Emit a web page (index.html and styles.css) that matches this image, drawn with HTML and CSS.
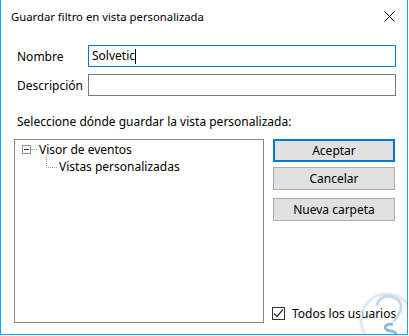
FILE: index.html
```html
<!DOCTYPE html>
<html lang="es">
<head>
    <meta charset="UTF-8">
    <title>Guardar filtro en vista personalizada</title>
    <link rel="stylesheet" href="styles.css">
</head>
<body>

<div class="window">
    <div class="titlebar">
        <span class="title">Guardar filtro en vista personalizada</span>
        <svg class="close" width="11" height="11" viewBox="0 0 11 11">
            <path d="M0.5 0.5 L10.5 10.5 M10.5 0.5 L0.5 10.5" stroke="#000" stroke-width="1" fill="none"/>
        </svg>
    </div>

    <div class="content">
        <div class="field-row">
            <span class="field-label">Nombre</span>
            <div class="field-input focused">Solvetic<span class="caret"></span></div>
        </div>
        <div class="field-row">
            <span class="field-label">Descripción</span>
            <div class="field-input"></div>
        </div>

        <div class="section-label">Seleccione dónde guardar la vista personalizada:</div>

        <div class="main">
            <div class="tree">
                <div class="tree-row">
                    <span class="expander"><span class="minus"></span></span>
                    <span class="dash"></span>
                    <span class="node-text">Visor de eventos</span>
                </div>
                <div class="tree-row child">
                    <span class="connector"></span>
                    <span class="node-text">Vistas personalizadas</span>
                </div>
            </div>

            <div class="actions">
                <button class="btn default">Aceptar</button>
                <button class="btn">Cancelar</button>
                <button class="btn spaced">Nueva carpeta</button>

                <label class="check-row">
                    <span class="checkbox">
                        <svg width="11" height="11" viewBox="0 0 11 11">
                            <path d="M1 5.5 L4 8.5 L10 1.5" stroke="#333" stroke-width="1.2" fill="none"/>
                        </svg>
                    </span>
                    <span class="check-text">Todos los usuarios</span>
                </label>
            </div>
        </div>
    </div>

    <!-- watermark -->
    <svg class="watermark" width="60" height="56" viewBox="0 0 60 56">
        <circle cx="34" cy="34" r="26" fill="none" stroke="#d8e3ea" stroke-width="3" opacity="0.8"/>
        <path d="M24 20 C24 8 46 6 48 20 C49 28 42 30 41 36" fill="none" stroke="#c6dced" stroke-width="3"/>
        <path d="M40 38 C30 38 30 44 38 45 C46 46 44 52 34 52" fill="none" stroke="#5d9fd4" stroke-width="3" opacity="0.7"/>
    </svg>
</div>

</body>
</html>
```

FILE: styles.css
```css
body {
    margin: 0;
    background-color: #ffffff;
    font-family: 'Noto Sans', 'Liberation Sans', sans-serif;
    font-size: 12px;
    color: #000;
}

.window {
    position: relative;
    width: 408px;
    height: 335px;
    box-sizing: border-box;
    border: 1px solid #18a0f0;
    border-top: none;
    display: flex;
    flex-direction: column;
    overflow: hidden;
}

.titlebar {
    height: 33px;
    display: flex;
    align-items: center;
    justify-content: space-between;
    padding: 0 12px 0 10px;
    flex-shrink: 0;
}

.title {
    font-size: 11.3px;
    line-height: 16px;
}

.content {
    flex: 1;
    display: flex;
    flex-direction: column;
    padding: 12px 11px 12px 13px;
}

.field-row {
    display: flex;
    align-items: center;
    height: 22px;
    padding-left: 3px;
    margin-bottom: 7px;
}

.field-label {
    width: 71px;
    flex-shrink: 0;
}

.field-input {
    flex: 1;
    height: 22px;
    box-sizing: border-box;
    border: 1px solid #7a7a7a;
    padding: 0 3px;
    line-height: 20px;
    display: flex;
    align-items: center;
}

.field-input.focused {
    border-color: #0078d7;
}

.caret {
    display: inline-block;
    width: 1px;
    height: 15px;
    background-color: #000;
}

.section-label {
    padding-left: 3px;
    margin-top: 11px;
    line-height: 16px;
}

.main {
    display: flex;
    margin-top: 9px;
    height: 184px;
}

.tree {
    width: 250px;
    box-sizing: border-box;
    border: 1px solid #828790;
    padding-top: 0;
}

.tree-row {
    display: flex;
    align-items: center;
    height: 18px;
}

.expander {
    width: 9px;
    height: 9px;
    box-sizing: border-box;
    border: 1px solid #919191;
    margin-left: 7px;
    display: flex;
    align-items: center;
    justify-content: center;
}

.minus {
    width: 5px;
    height: 1px;
    background-color: #2f2f2f;
}

.dash {
    width: 6px;
    border-bottom: 1px dotted #9a9a9a;
    margin-right: 2px;
}

.tree-row.child {
    align-items: flex-start;
}

.connector {
    width: 10px;
    height: 12px;
    margin-top: -3px;
    margin-left: 31px;
    border-left: 1px dotted #9a9a9a;
    border-bottom: 1px dotted #9a9a9a;
    margin-right: 2px;
    flex-shrink: 0;
}

.tree-row.child .node-text {
    line-height: 18px;
}

.actions {
    width: 122px;
    margin-left: 9px;
    display: flex;
    flex-direction: column;
}

.btn {
    height: 23px;
    box-sizing: border-box;
    background-color: #e1e1e1;
    border: 1px solid #adadad;
    font-family: inherit;
    font-size: 12px;
    color: #000;
    padding: 0;
    margin-bottom: 5px;
}

.btn.default {
    border: 2px solid #0078d7;
}

.btn.spaced {
    margin-top: 3px;
}

.check-row {
    margin-top: auto;
    margin-bottom: 3px;
    display: flex;
    align-items: center;
    height: 14px;
    white-space: nowrap;
}

.checkbox {
    width: 13px;
    height: 13px;
    flex-shrink: 0;
    box-sizing: border-box;
    border: 1px solid #333;
    display: flex;
    align-items: center;
    justify-content: center;
    margin-left: -1px;
    margin-right: 7px;
}

.watermark {
    position: absolute;
    right: -6px;
    bottom: -8px;
}
```
